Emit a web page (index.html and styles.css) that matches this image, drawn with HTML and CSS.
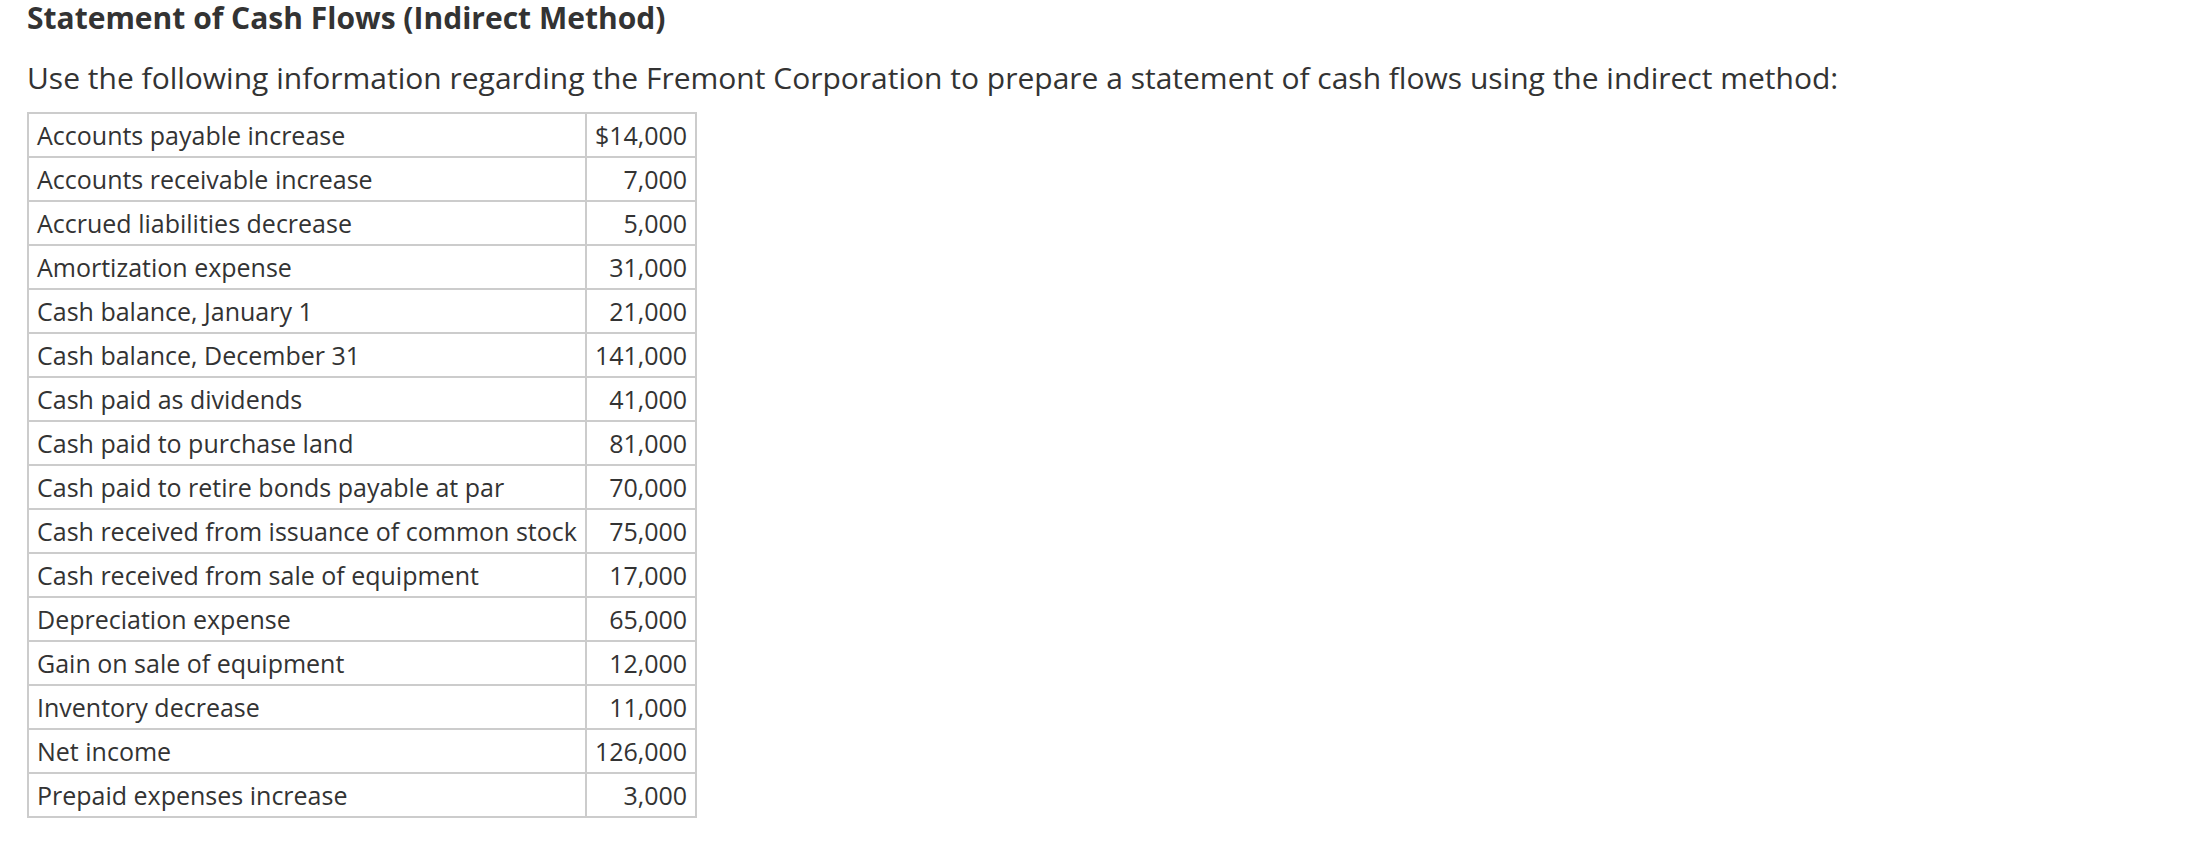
FILE: index.html
```html
<!DOCTYPE html>
<html lang="en">
<head>
<meta charset="utf-8">
<title>Statement of Cash Flows (Indirect Method)</title>
<link rel="stylesheet" href="styles.css">
</head>
<body>
<main class="page">
  <h1 class="title">Statement of Cash Flows (Indirect Method)</h1>
  <p class="intro">Use the following information regarding the Fremont Corporation to prepare a statement of cash flows using the indirect method:</p>
  <table class="data">
    <tbody>
      <tr><td class="label">Accounts payable increase</td><td class="num">$14,000</td></tr>
      <tr><td class="label">Accounts receivable increase</td><td class="num">7,000</td></tr>
      <tr><td class="label">Accrued liabilities decrease</td><td class="num">5,000</td></tr>
      <tr><td class="label">Amortization expense</td><td class="num">31,000</td></tr>
      <tr><td class="label">Cash balance, January 1</td><td class="num">21,000</td></tr>
      <tr><td class="label">Cash balance, December 31</td><td class="num">141,000</td></tr>
      <tr><td class="label">Cash paid as dividends</td><td class="num">41,000</td></tr>
      <tr><td class="label">Cash paid to purchase land</td><td class="num">81,000</td></tr>
      <tr><td class="label">Cash paid to retire bonds payable at par</td><td class="num">70,000</td></tr>
      <tr><td class="label">Cash received from issuance of common stock</td><td class="num">75,000</td></tr>
      <tr><td class="label">Cash received from sale of equipment</td><td class="num">17,000</td></tr>
      <tr><td class="label">Depreciation expense</td><td class="num">65,000</td></tr>
      <tr><td class="label">Gain on sale of equipment</td><td class="num">12,000</td></tr>
      <tr><td class="label">Inventory decrease</td><td class="num">11,000</td></tr>
      <tr><td class="label">Net income</td><td class="num">126,000</td></tr>
      <tr><td class="label">Prepaid expenses increase</td><td class="num">3,000</td></tr>
    </tbody>
  </table>
</main>
</body>
</html>
```

FILE: styles.css
```css
html, body {
  margin: 0;
  padding: 0;
  background: #ffffff;
}

body {
  font-family: "Open Sans", "Noto Sans", "Liberation Sans", sans-serif;
  color: #333333;
}

.page {
  padding: 0 27px;
}

.title {
  margin: 0;
  font-size: 30px;
  font-weight: 700;
  line-height: 36px;
  color: #333333;
}

.intro {
  margin: 21px 0 0 0;
  font-size: 30px;
  font-weight: 400;
  line-height: 41px;
  color: #333333;
}

.data {
  margin-top: 14px;
  border: 1px solid #cccccc;
  border-spacing: 0;
  border-collapse: separate;
  font-size: 25px;
  line-height: 34px;
}

.data td {
  border: 1px solid #cccccc;
  padding: 4px 8px 4px 8px;
  white-space: nowrap;
}

.data .num {
  text-align: right;
}
```
